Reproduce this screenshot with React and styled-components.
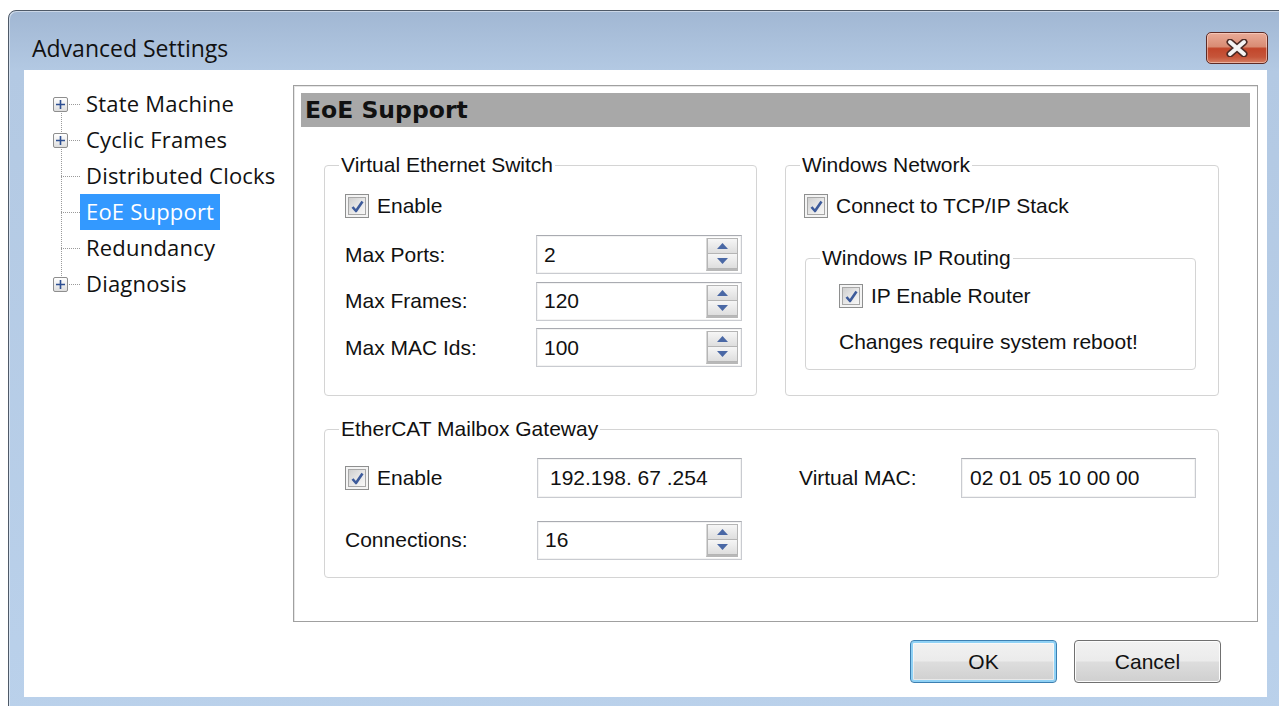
import styled, { createGlobalStyle } from "styled-components"

const GlobalStyle = createGlobalStyle`
        html, body {
                margin: 0;
                padding: 0;
                background: #fff;
                overflow: hidden;
        }
        body {
                font-family: "Liberation Sans", Arial, sans-serif;
                color: #000;
        }
`

const Page = styled.div`
        width: 1279px;
        height: 706px;
        overflow: hidden;
        padding: 10px 0 0 8px;
        box-sizing: border-box;
`

// the dialog runs past the right and bottom edges of the page
const Window = styled.div`
        width: 1300px;
        height: 720px;
        box-sizing: border-box;
        border: 1px solid #4f5a68;
        border-radius: 8px 8px 0 0;
        padding: 0 40px 0 15px;
        display: flex;
        flex-direction: column;
        background: linear-gradient(to bottom, #a1b7d3 0, #b3c9e3 60px, #bad1eb 100%);
        box-shadow: inset 1px 1px 0 rgba(255, 255, 255, 0.45);
`

const TitleBar = styled.div`
        height: 59px;
        flex: 0 0 59px;
        box-sizing: border-box;
        padding-top: 14px;
        display: flex;
        align-items: center;
        justify-content: space-between;
`

const Title = styled.div`
        margin-left: 8px;
        font-family: "Open Sans", "Noto Sans", sans-serif;
        font-size: 23px;
        color: #111;
`

const CloseButton = styled.div`
        width: 62px;
        height: 32px;
        margin-right: -1px;
        box-sizing: border-box;
        border: 1px solid #5e2b25;
        border-radius: 5px;
        display: flex;
        align-items: center;
        justify-content: center;
        background: linear-gradient(to bottom, #e9ab98 0, #d98c74 45%, #c2462b 52%, #c6553a 80%, #d47e62 100%);
        box-shadow: inset 0 0 0 1px rgba(255, 220, 210, 0.55);
`

const Client = styled.div`
        height: 627px;
        flex: 0 0 627px;
        box-sizing: border-box;
        background: #fff;
        display: grid;
        grid-template-columns: 269px 965px;
        grid-template-rows: 537px auto;
        padding-top: 15px;
`

const Tree = styled.ul`
        grid-row: 1 / 3;
        list-style: none;
        margin: 0;
        padding: 1px 0 0;
        position: relative;
        font-family: "Open Sans", "Noto Sans", sans-serif;
        font-size: 22px;

        &::before {
                content: "";
                position: absolute;
                left: 37px;
                top: 19px;
                height: 180px;
                border-left: 1px dotted #9a9a9a;
        }
`

const TreeRow = styled.li`
        height: 36px;
        display: flex;
        align-items: center;
        padding-left: 29px;
`

const Twig = styled.span`
        width: 27px;
        display: flex;
        align-items: center;
        padding-left: ${p => (p.$leaf ? "8px" : "0")};
        box-sizing: border-box;
`

const Dots = styled.span`
        flex: 1;
        height: 0;
        border-top: 1px dotted #9a9a9a;
`

const PlusBox = styled.span`
        position: relative;
        z-index: 1;
        width: 15px;
        height: 15px;
        box-sizing: border-box;
        border: 1px solid #8e8e8e;
        border-radius: 2px;
        background: linear-gradient(to bottom, #fff, #dedede);
        display: flex;
        align-items: center;
        justify-content: center;
        margin-right: 1px;
`

const TreeLabel = styled.span`
        height: 36px;
        line-height: 35px;
        padding: 0 6px;
        white-space: nowrap;
        letter-spacing: 0.2px;
        background: ${p => (p.$selected ? "#3399ff" : "transparent")};
        color: ${p => (p.$selected ? "#fff" : "#111")};
`

const Panel = styled.div`
        grid-column: 2;
        border: 1px solid #a0a0a0;
        box-shadow: inset 1px 1px 0 #e6e6e6;
        padding: 7px;
        box-sizing: border-box;
        display: flex;
        flex-direction: column;
`

const PanelHeader = styled.div`
        height: 34px;
        flex: 0 0 34px;
        background: #a8a8a8;
        padding-left: 4px;
        display: flex;
        align-items: center;
        font-family: "DejaVu Sans", Verdana, sans-serif;
        font-weight: bold;
        font-size: 23.5px;
        color: #111;
`

const PanelBody = styled.div`
        padding: 26px 31px 0 23px;
        display: grid;
        grid-template-columns: 433px 434px;
        column-gap: 28px;
        row-gap: 21px;
        align-items: start;
`

const Group = styled.fieldset`
        margin: 0;
        padding: 0;
        min-width: 0;
        border: 1px solid #d4d4d4;
        border-radius: 4px;
        grid-column: ${p => (p.$wide ? "1 / 3" : "auto")};
        align-self: stretch;
`

const Legend = styled.legend`
        margin-left: 14px;
        padding: 0 2px;
        font-size: 21px;
        line-height: 24px;
        color: #111;
`

const GroupBody = styled.div`
        padding: ${p => p.$pad};
`

const SubGroup = styled(Group)`
        margin: 28px 0 0 1px;
`

const CheckRow = styled.label`
        display: flex;
        align-items: center;
        gap: 8px;
        height: 24px;
        font-size: 21px;
        color: #111;
`

const CheckBox = styled.span`
        width: 24px;
        height: 24px;
        flex: 0 0 24px;
        box-sizing: border-box;
        border: 1px solid #8e8f8f;
        background: #f4f4f4;
        padding: 2px;
        display: flex;

        & > span {
                flex: 1;
                border: 1px solid #a7a7a7;
                background: linear-gradient(135deg, #cfcfcf 0, #e6e6e6 50%, #f8f8f8 100%);
                display: flex;
                align-items: center;
                justify-content: center;
        }
`

const FieldGrid = styled.div`
        display: grid;
        grid-template-columns: ${p => p.$cols};
        grid-auto-rows: ${p => p.$rows || "39px"};
        row-gap: ${p => p.$gap || "8px"};
        align-items: center;
        margin-top: ${p => p.$top || "0"};
`

const FieldLabel = styled.span`
        font-size: 21px;
        color: #111;
        white-space: nowrap;
`

const TextBox = styled.div`
        width: ${p => p.$w}px;
        height: ${p => p.$h || 39}px;
        box-sizing: border-box;
        border: 1px solid #c9cbd0;
        border-top-color: #a9abb1;
        box-shadow: inset 0 0 0 1px #f3f3f3;
        background: #fff;
        display: flex;
        align-items: center;
        padding-left: ${p => p.$indent || 7}px;
        font-size: 21px;
        color: #111;
        white-space: pre;
`

const Value = styled.span`
        flex: 1;
`

const SpinStack = styled.div`
        align-self: stretch;
        width: 31px;
        margin: 2px 3px 2px 0;
        display: flex;
        flex-direction: column;
        border-left: 1px solid #d8d8d8;
        border-bottom: 2px solid #b8b8b8;
`

const SpinButton = styled.div`
        flex: 1;
        border: 1px solid #b5b5b5;
        border-bottom-width: 0;
        &:last-child {
                border-bottom-width: 1px;
        }
        background: linear-gradient(to bottom, #f6f6f6, #dedede);
        display: flex;
        align-items: center;
        justify-content: center;
`

const Note = styled.div`
        font-size: 21px;
        line-height: 24px;
        color: #111;
        margin-top: ${p => p.$top};
`

const Footer = styled.div`
        grid-column: 2;
        display: flex;
        justify-content: flex-end;
        gap: 17px;
        padding: 18px 37px 0 0;
`

const DialogButton = styled.button`
        width: 147px;
        height: 43px;
        box-sizing: border-box;
        border: 1px solid ${p => (p.$primary ? "#3c7fb1" : "#707070")};
        border-radius: 4px;
        background: linear-gradient(to bottom, #f2f2f2 0, #ebebeb 48%, #dddddd 52%, #cfcfcf 100%);
        box-shadow: ${p => (p.$primary ? "inset 0 0 0 2px #8fd1f5, inset 0 0 0 3px #ffffff88" : "inset 0 0 0 1px #fcfcfc")};
        font-family: "Liberation Sans", Arial, sans-serif;
        font-size: 21px;
        color: #111;
        padding: 0;
`

const Plus = () => (
        <svg width="9" height="9" viewBox="0 0 9 9">
                <path d="M0 4.5h9M4.5 0v9" stroke="#2d4f92" strokeWidth="1.6" />
        </svg>
)

const Tick = () => (
        <svg width="15" height="15" viewBox="0 0 15 15">
                <path d="M2.5 8 L6 12 L12.5 2.5" fill="none" stroke="#3d5b9b" strokeWidth="2.6" strokeLinejoin="round" />
        </svg>
)

const Arrow = ({ down }) => (
        <svg width="11" height="6" viewBox="0 0 11 6">
                <path d={down ? "M0 0h11L5.5 6z" : "M0 6h11L5.5 0z"} fill="#4a68a5" />
        </svg>
)

const CloseGlyph = () => (
        <svg width="26" height="18" viewBox="0 0 26 18">
                <path d="M6 3L20 15M20 3L6 15" stroke="#4b2a25" strokeWidth="7" strokeLinecap="round" />
                <path d="M6 3L20 15M20 3L6 15" stroke="#f4f4f4" strokeWidth="4" strokeLinecap="round" />
        </svg>
)

const Check = ({ children }) => (
        <CheckRow>
                <CheckBox><span><Tick /></span></CheckBox>
                {children}
        </CheckRow>
)

const Spinner = ({ value, width = 206 }) => (
        <TextBox $w={width}>
                <Value>{value}</Value>
                <SpinStack>
                        <SpinButton><Arrow /></SpinButton>
                        <SpinButton><Arrow down /></SpinButton>
                </SpinStack>
        </TextBox>
)

const treeItems = [
        { label: "State Machine", folder: true },
        { label: "Cyclic Frames", folder: true },
        { label: "Distributed Clocks" },
        { label: "EoE Support", selected: true },
        { label: "Redundancy" },
        { label: "Diagnosis", folder: true },
]

export default function App() {
        return (
                <Page>
                        <GlobalStyle />
                        <Window>
                                <TitleBar>
                                        <Title>Advanced Settings</Title>
                                        <CloseButton><CloseGlyph /></CloseButton>
                                </TitleBar>
                                <Client>
                                        <Tree>
                                                {treeItems.map(item => (
                                                        <TreeRow key={item.label}>
                                                                <Twig $leaf={!item.folder}>
                                                                        {item.folder && <PlusBox><Plus /></PlusBox>}
                                                                        <Dots />
                                                                </Twig>
                                                                <TreeLabel $selected={item.selected}>{item.label}</TreeLabel>
                                                        </TreeRow>
                                                ))}
                                        </Tree>

                                        <Panel>
                                                <PanelHeader>EoE Support</PanelHeader>
                                                <PanelBody>
                                                        <Group>
                                                                <Legend>Virtual Ethernet Switch</Legend>
                                                                <GroupBody $pad="17px 0 27px 20px">
                                                                        <Check>Enable</Check>
                                                                        <FieldGrid $cols="191px 206px" $top="17px" $gap="7.5px">
                                                                                <FieldLabel>Max Ports:</FieldLabel>
                                                                                <Spinner value="2" />
                                                                                <FieldLabel>Max Frames:</FieldLabel>
                                                                                <Spinner value="120" />
                                                                                <FieldLabel>Max MAC Ids:</FieldLabel>
                                                                                <Spinner value="100" />
                                                                        </FieldGrid>
                                                                </GroupBody>
                                                        </Group>

                                                        <Group>
                                                                <Legend>Windows Network</Legend>
                                                                <GroupBody $pad="17px 22px 25px 18px">
                                                                        <Check>Connect to TCP/IP Stack</Check>
                                                                        <SubGroup>
                                                                                <Legend>Windows IP Routing</Legend>
                                                                                <GroupBody $pad="14px 0 15px 33px">
                                                                                        <Check>IP Enable Router</Check>
                                                                                        <Note $top="22px">Changes require system reboot!</Note>
                                                                                </GroupBody>
                                                                        </SubGroup>
                                                                </GroupBody>
                                                        </Group>

                                                        <Group $wide>
                                                                <Legend>EtherCAT Mailbox Gateway</Legend>
                                                                <GroupBody $pad="17px 0 17px 20px">
                                                                        <FieldGrid $cols="192px 262px 162px 235px" $rows="40px" $gap="22px">
                                                                                <Check>Enable</Check>
                                                                                <TextBox $w={205} $h={40} $indent={12}>192.198. 67 .254</TextBox>
                                                                                <FieldLabel>Virtual MAC:</FieldLabel>
                                                                                <TextBox $w={235} $h={40} $indent={8}>02 01 05 10 00 00</TextBox>
                                                                                <FieldLabel>Connections:</FieldLabel>
                                                                                <Spinner value="16" width={205} />
                                                                        </FieldGrid>
                                                                </GroupBody>
                                                        </Group>
                                                </PanelBody>
                                        </Panel>

                                        <Footer>
                                                <DialogButton $primary>OK</DialogButton>
                                                <DialogButton>Cancel</DialogButton>
                                        </Footer>
                                </Client>
                        </Window>
                </Page>
        )
}
